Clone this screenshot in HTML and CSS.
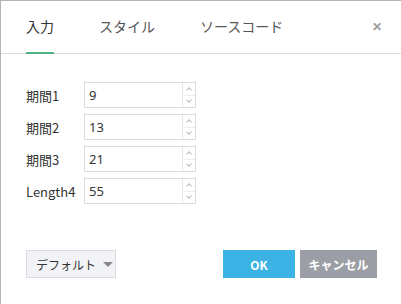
FILE: index.html
```html
<!DOCTYPE html>
<html lang="ja">
<head>
    <meta charset="UTF-8">
    <title>設定</title>
    <link rel="stylesheet" href="styles.css">
</head>
<body>
    <div class="dialog">
        <!-- Tabs -->
        <div class="tabs">
            <div class="tab active">入力</div>
            <div class="tab">スタイル</div>
            <div class="tab">ソースコード</div>
            <div class="close">&#x2715;</div>
        </div>

        <!-- Inputs -->
        <div class="form">
            <div class="row">
                <label class="label">期間1</label>
                <div class="field">
                    <input class="value" type="text" value="9">
                    <div class="spin"><span class="up"></span><span class="down"></span></div>
                </div>
            </div>
            <div class="row">
                <label class="label">期間2</label>
                <div class="field">
                    <input class="value" type="text" value="13">
                    <div class="spin"><span class="up"></span><span class="down"></span></div>
                </div>
            </div>
            <div class="row">
                <label class="label">期間3</label>
                <div class="field">
                    <input class="value" type="text" value="21">
                    <div class="spin"><span class="up"></span><span class="down"></span></div>
                </div>
            </div>
            <div class="row">
                <label class="label">Length4</label>
                <div class="field">
                    <input class="value" type="text" value="55">
                    <div class="spin"><span class="up"></span><span class="down"></span></div>
                </div>
            </div>
        </div>

        <!-- Footer -->
        <div class="footer">
            <button class="defaults">デフォルト <span class="caret"></span></button>
            <div class="actions">
                <button class="btn ok">OK</button>
                <button class="btn cancel">キャンセル</button>
            </div>
        </div>
    </div>
</body>
</html>
```

FILE: styles.css
```css
body {
    margin: 0;
    padding: 0;
    background: #fff;
    overflow: hidden;
    font-family: "Noto Sans CJK JP", "Noto Sans", sans-serif;
    color: #333;
}

.dialog {
    width: 420px;
    height: 304px;
    border-top: 1px solid #b4b4b4;
    border-left: 1px solid #b4b4b4;
    box-sizing: border-box;
}

.tabs {
    display: flex;
    align-items: stretch;
    height: 53px;
    padding-left: 25px;
    border-bottom: 1px solid #dcdcdc;
    width: 400px;
    box-sizing: border-box;
}

.tab {
    font-size: 14px;
    line-height: 20px;
    padding-top: 15px;
    margin-right: 45px;
    color: #555;
    box-sizing: border-box;
}

.tab.active {
    color: #333;
    border-bottom: 2px solid #4db383;
    margin-bottom: -1px;
}

.close {
    margin-left: auto;
    margin-right: 19px;
    padding-top: 15px;
    font-size: 12px;
    line-height: 20px;
    font-weight: bold;
    color: #999;
}

.form {
    padding: 28px 0 0 25px;
    display: flex;
    flex-direction: column;
    gap: 6px;
}

.row {
    display: flex;
    align-items: center;
    height: 26px;
}

.label {
    width: 58px;
    font-size: 13px;
    color: #333;
}

.field {
    display: flex;
    width: 112px;
    height: 26px;
    border: 1px solid #dcdcdc;
    box-sizing: border-box;
}

.value {
    flex: 1;
    min-width: 0;
    border: none;
    outline: none;
    padding: 0 0 0 4px;
    font-family: "Noto Sans", sans-serif;
    font-size: 13px;
    color: #333;
}

.spin {
    width: 12px;
    border-left: 1px solid #e4e4e4;
    display: flex;
    flex-direction: column;
}

.spin span {
    flex: 1;
    position: relative;
}

.spin .up {
    border-bottom: 1px solid #eee;
}

.spin span::after {
    content: "";
    position: absolute;
    left: 4px;
    width: 3px;
    height: 3px;
    border-left: 1px solid #bbb;
    border-top: 1px solid #bbb;
}

.spin .up::after {
    top: 5px;
    transform: rotate(45deg);
}

.spin .down::after {
    top: 2px;
    transform: rotate(-135deg);
}

.footer {
    display: flex;
    align-items: center;
    justify-content: space-between;
    width: 400px;
    box-sizing: border-box;
    padding: 0 24px 0 25px;
    margin-top: 46px;
}

.defaults {
    height: 28px;
    width: 90px;
    background: #f2f3f6;
    border: 1px solid #d9dce1;
    font-family: "Noto Sans CJK JP", sans-serif;
    font-size: 12px;
    color: #333;
    padding: 0 0 0 9px;
    text-align: left;
    display: flex;
    align-items: center;
    gap: 7px;
}

.caret {
    width: 0;
    height: 0;
    border-left: 5px solid transparent;
    border-right: 5px solid transparent;
    border-top: 5px solid #888;
}

.actions {
    display: flex;
    gap: 5px;
}

.btn {
    height: 28px;
    border: none;
    color: #fff;
    font-family: "Noto Sans CJK JP", sans-serif;
    font-size: 12px;
    font-weight: bold;
    padding: 0;
}

.ok {
    width: 72px;
    background: #3cb3e4;
}

.cancel {
    width: 77px;
    background: #9b9ea5;
}
```
